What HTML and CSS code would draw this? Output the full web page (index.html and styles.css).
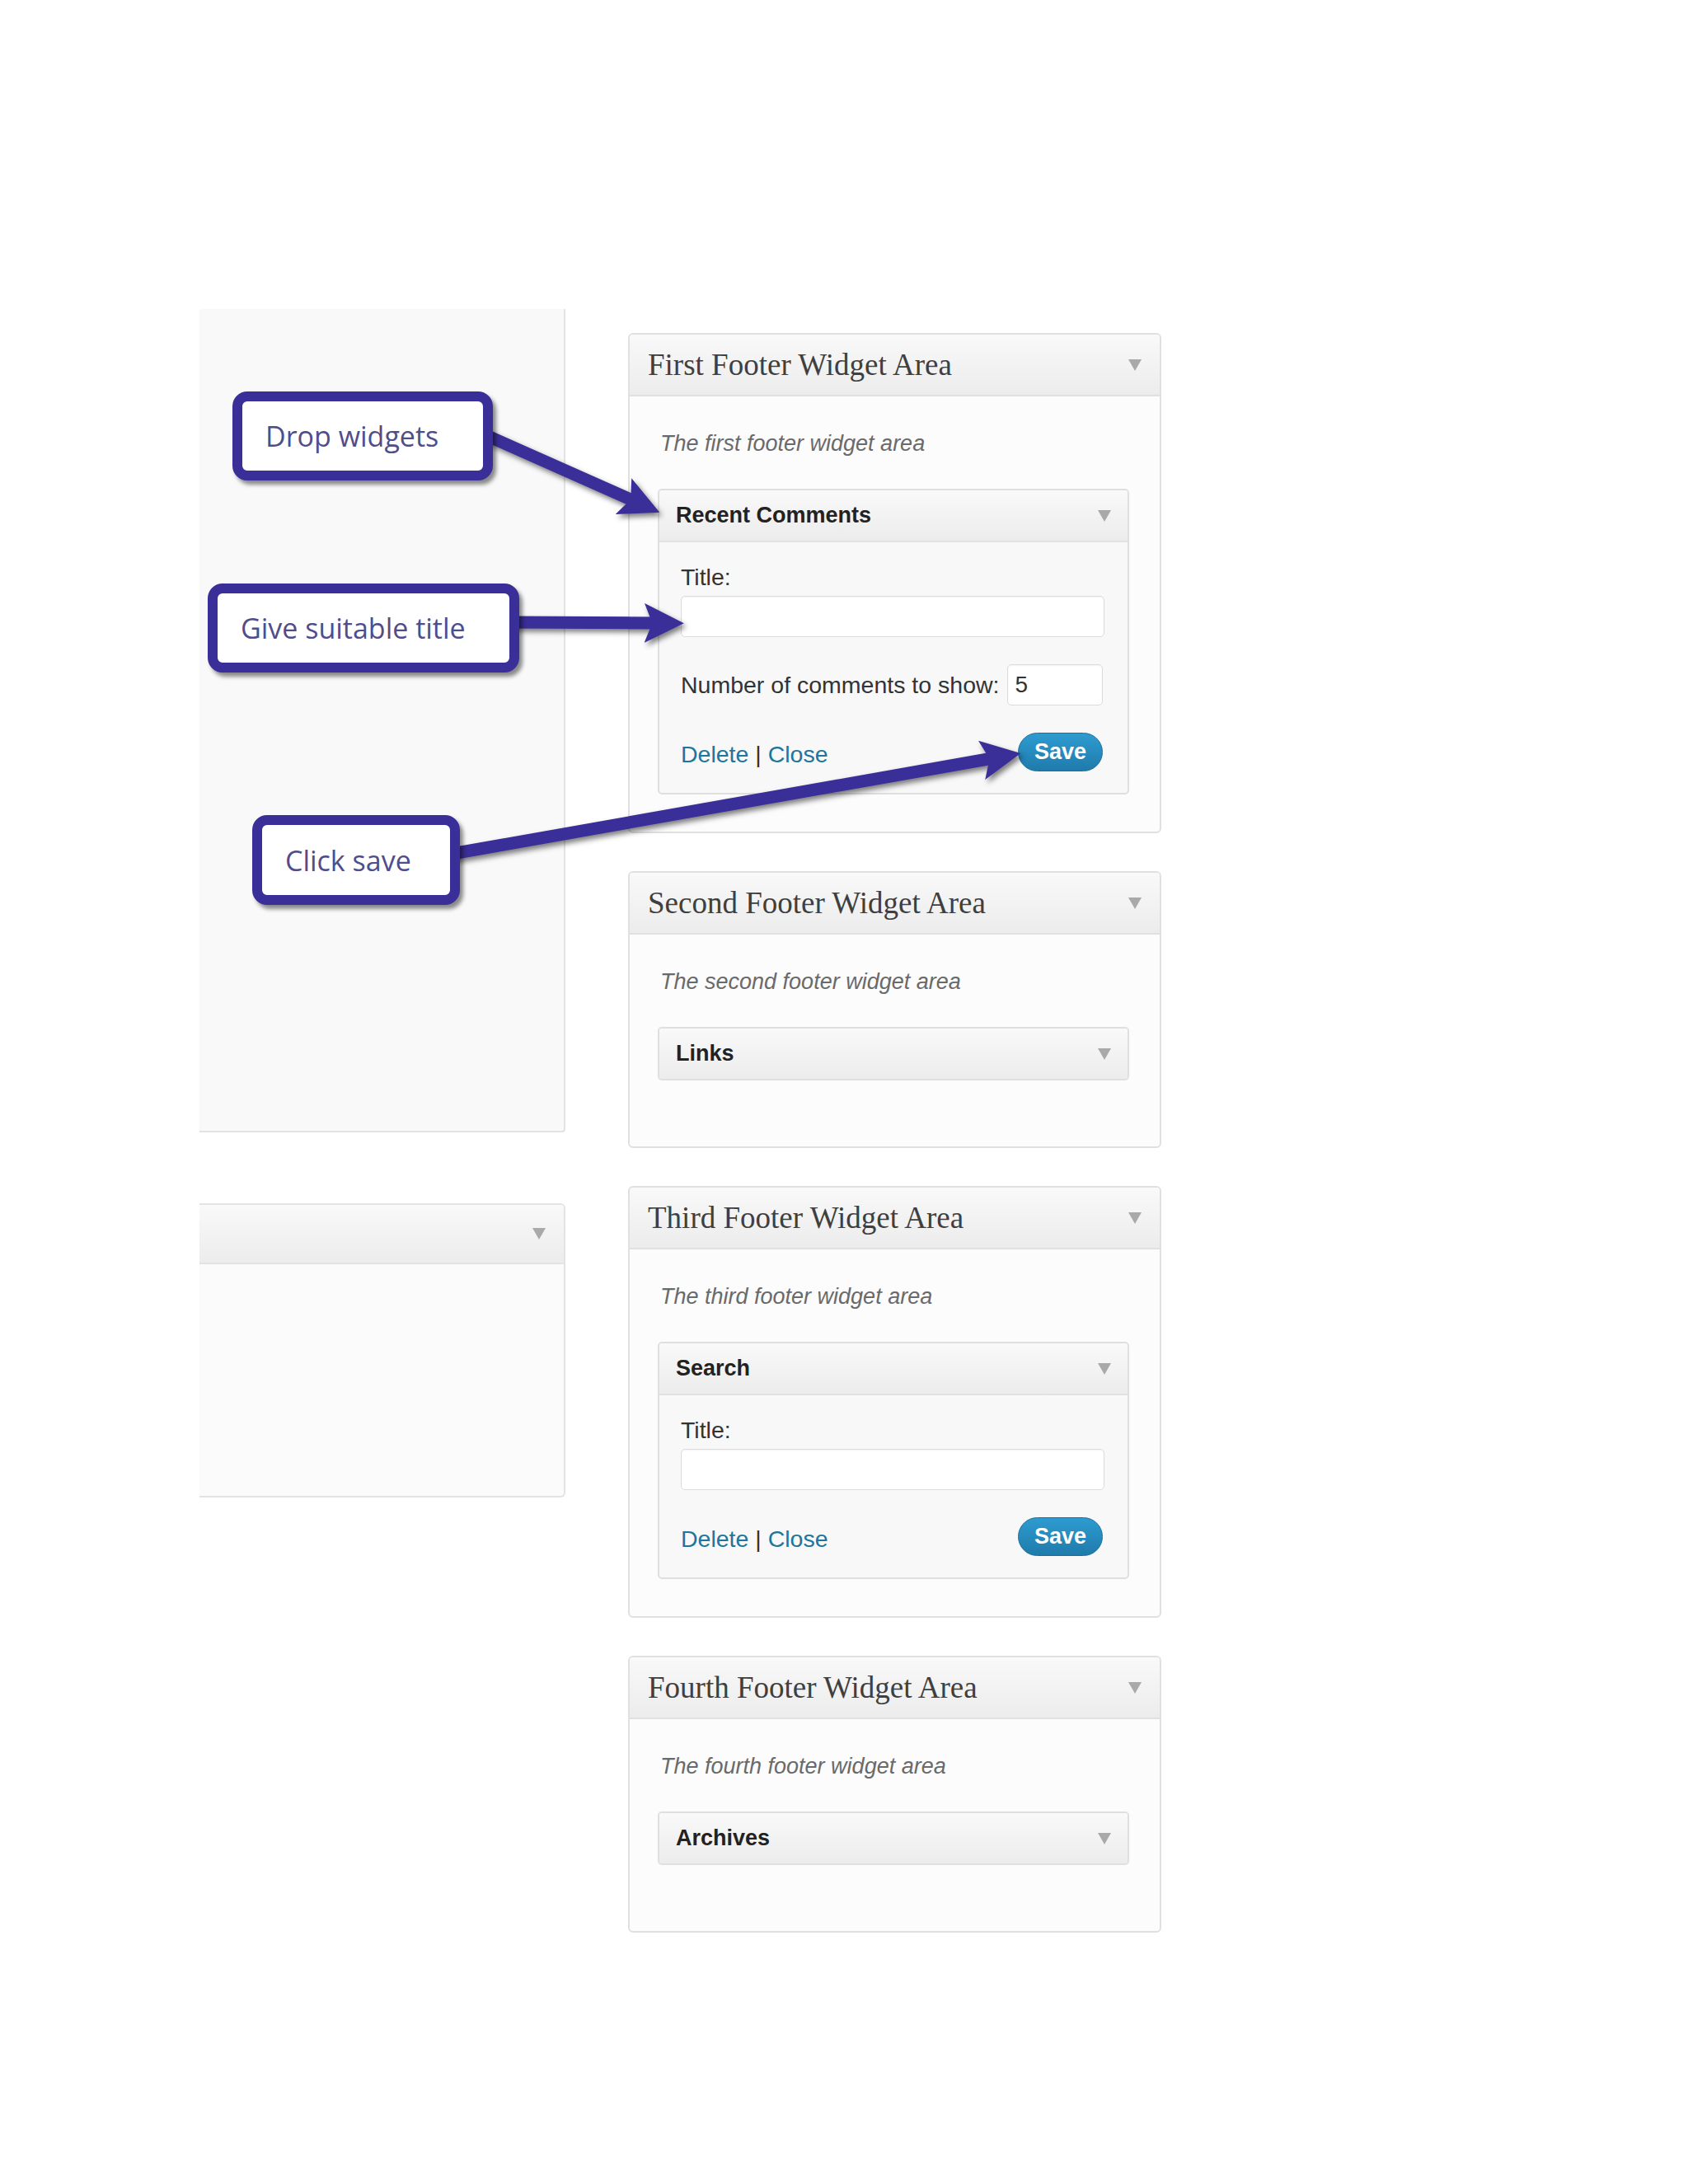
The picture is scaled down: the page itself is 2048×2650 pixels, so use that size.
FILE: index.html
```html
<!DOCTYPE html>
<html lang="en">
<head>
  <meta charset="UTF-8">
  <title>Footer Widget Areas</title>
  <link rel="stylesheet" href="styles.css">
</head>
<body>

<div class="screen">
  <div class="sidebar">
    <div class="side-panel"></div>
    <div class="side-box">
      <div class="side-head"><span class="caret"></span></div>
    </div>
  </div>

  <div class="areas">
    <div class="area">
      <div class="area-head"><h3>First Footer Widget Area</h3><span class="caret"></span></div>
      <div class="area-body">
        <p class="desc">The first footer widget area</p>
        <div class="widget open">
          <div class="widget-head"><h4>Recent Comments</h4><span class="caret"></span></div>
          <div class="widget-body">
            <label>Title:</label>
            <input class="text-in" type="text">
            <div class="field-row">
              <label>Number of comments to show:</label>
              <input class="num-in" type="text" value="5">
            </div>
            <div class="widget-foot">
              <span class="links"><a href="#">Delete</a> | <a href="#">Close</a></span>
              <button class="save">Save</button>
            </div>
          </div>
        </div>
      </div>
    </div>

    <div class="area">
      <div class="area-head"><h3>Second Footer Widget Area</h3><span class="caret"></span></div>
      <div class="area-body short">
        <p class="desc">The second footer widget area</p>
        <div class="widget">
          <div class="widget-head"><h4>Links</h4><span class="caret"></span></div>
        </div>
      </div>
    </div>

    <div class="area">
      <div class="area-head"><h3>Third Footer Widget Area</h3><span class="caret"></span></div>
      <div class="area-body">
        <p class="desc">The third footer widget area</p>
        <div class="widget open">
          <div class="widget-head"><h4>Search</h4><span class="caret"></span></div>
          <div class="widget-body">
            <label>Title:</label>
            <input class="text-in" type="text">
            <div class="widget-foot">
              <span class="links"><a href="#">Delete</a> | <a href="#">Close</a></span>
              <button class="save">Save</button>
            </div>
          </div>
        </div>
      </div>
    </div>

    <div class="area">
      <div class="area-head"><h3>Fourth Footer Widget Area</h3><span class="caret"></span></div>
      <div class="area-body short">
        <p class="desc">The fourth footer widget area</p>
        <div class="widget">
          <div class="widget-head"><h4>Archives</h4><span class="caret"></span></div>
        </div>
      </div>
    </div>
  </div>
</div>

<!-- annotation arrows -->
<svg class="arrows" width="2048" height="2650" viewBox="0 0 2048 2650">
  <defs>
    <marker id="head" viewBox="0 0 10 10" refX="4" refY="5" markerWidth="3.2" markerHeight="3.2" orient="auto">
      <path d="M0,0 L10,5 L0,10 L2,5 z"/>
    </marker>
  </defs>
  <line x1="585" y1="526" x2="774" y2="610" marker-end="url(#head)"/>
  <line x1="620" y1="755" x2="801" y2="756" marker-end="url(#head)"/>
  <line x1="548" y1="1036" x2="1210" y2="919" marker-end="url(#head)"/>
</svg>

<div class="callout c-drop">Drop widgets</div>
<div class="callout c-title">Give suitable title</div>
<div class="callout c-save">Click save</div>

</body>
</html>
```

FILE: styles.css
```css
* { box-sizing: border-box; }
body {
  margin: 0;
  background: #fff;
  font-family: "Liberation Sans", Arial, sans-serif;
  color: #333;
  position: relative;
  min-height: 2650px;
}
.screen {
  display: flex;
  align-items: flex-start;
  gap: 76px;
  padding: 375px 0 0 242px;
}
.caret {
  width: 0;
  height: 0;
  border-left: 8px solid transparent;
  border-right: 8px solid transparent;
  border-top: 14px solid #a9a9a9;
}

/* left column */
.sidebar {
  width: 444px;
  display: flex;
  flex-direction: column;
  gap: 86px;
}
.side-panel {
  height: 999px;
  background: #f9f9fa;
  border-right: 2px solid #e3e3e3;
  border-bottom: 2px solid #e3e3e3;
  border-bottom-right-radius: 4px;
}
.side-box {
  height: 357px;
  background: #fbfbfc;
  border: 2px solid #e3e3e3;
  border-left: 0;
  border-radius: 0 6px 6px 0;
  overflow: hidden;
}
.side-head {
  height: 72px;
  display: flex;
  align-items: center;
  justify-content: flex-end;
  padding-right: 22px;
  background: linear-gradient(#f9f9f9, #ececec);
  border-bottom: 2px solid #e3e3e3;
}

/* widget areas */
.areas {
  width: 647px;
  margin-top: 29px;
  display: flex;
  flex-direction: column;
  gap: 46px;
}
.area {
  border: 2px solid #e0e0e0;
  border-radius: 6px;
  background: #fcfcfd;
  overflow: hidden;
}
.area-head {
  height: 75px;
  display: flex;
  align-items: center;
  justify-content: space-between;
  padding: 0 22px;
  background: linear-gradient(#f9f9f9, #ececec);
  border-bottom: 2px solid #e0e0e0;
}
.area-head h3 {
  margin: 0;
  font: normal 37px "Liberation Serif", "Times New Roman", serif;
  color: #3f3f3f;
}
.area-body { padding: 0 37px 45px 34px; }
.area-body.short { padding-bottom: 80px; }
.desc {
  margin: 37px 0 35px 3px;
  font-style: italic;
  font-size: 27px;
  line-height: 40px;
  color: #6a6a6a;
}

.widget {
  border: 2px solid #dfdfdf;
  border-radius: 5px;
  background: #f8f8f8;
  overflow: hidden;
}
.widget-head {
  height: 61px;
  display: flex;
  align-items: center;
  justify-content: space-between;
  padding: 0 20px;
  background: linear-gradient(#f9f9f9, #ececec);
}
.widget.open .widget-head { height: 63px; border-bottom: 2px solid #e2e2e2; }
.widget-head h4 {
  margin: 0;
  font-size: 27px;
  font-weight: bold;
  color: #222;
}
.widget-body {
  padding: 24px 28px 26px 26px;
  font-size: 28.5px;
}
.widget-body label {
  display: block;
  line-height: 36px;
  color: #333;
}
.text-in, .num-in {
  height: 50px;
  border: 1px solid #dcdcdc;
  border-radius: 5px;
  background: #fff;
  box-shadow: inset 0 1px 2px rgba(0,0,0,.05);
  font: 28px "Liberation Sans", Arial, sans-serif;
  color: #333;
}
.text-in {
  display: block;
  width: 100%;
  margin-top: 5px;
}
.field-row {
  display: flex;
  align-items: center;
  margin-top: 33px;
}
.num-in {
  width: 116px;
  margin-left: 10px;
  padding: 0 8px;
}
.widget-foot {
  display: flex;
  align-items: center;
  justify-content: space-between;
  margin-top: 33px;
}
.links { padding-top: 6px; color: #333; }
.links a { color: #21759b; text-decoration: none; }
.save {
  height: 47px;
  padding: 0 19px;
  margin-right: 2px;
  border: 1px solid #1e6e97;
  border-radius: 24px;
  background: linear-gradient(#2e9bd0, #1f7bab);
  color: #fff;
  font: bold 27px "Liberation Sans", Arial, sans-serif;
}

/* annotations */
.arrows {
  position: absolute;
  left: 0;
  top: 0;
  pointer-events: none;
  filter: drop-shadow(3px 4px 3px rgba(0,0,0,.5));
}
.arrows line {
  stroke: #3a2e98;
  stroke-width: 15;
}
.arrows path { fill: #3a2e98; }

.callout {
  position: absolute;
  height: 108px;
  display: flex;
  align-items: center;
  padding-left: 28px;
  border: 12px solid #3a2e98;
  border-radius: 18px;
  background: #fff;
  font: 34px "Open Sans", sans-serif;
  color: #4f4d8c;
  box-shadow: 4px 5px 5px rgba(0,0,0,.45);
}
.c-drop { left: 282px; top: 475px; width: 316px; }
.c-title { left: 252px; top: 708px; width: 378px; }
.c-save { left: 306px; top: 989px; width: 252px; height: 109px; }
```
